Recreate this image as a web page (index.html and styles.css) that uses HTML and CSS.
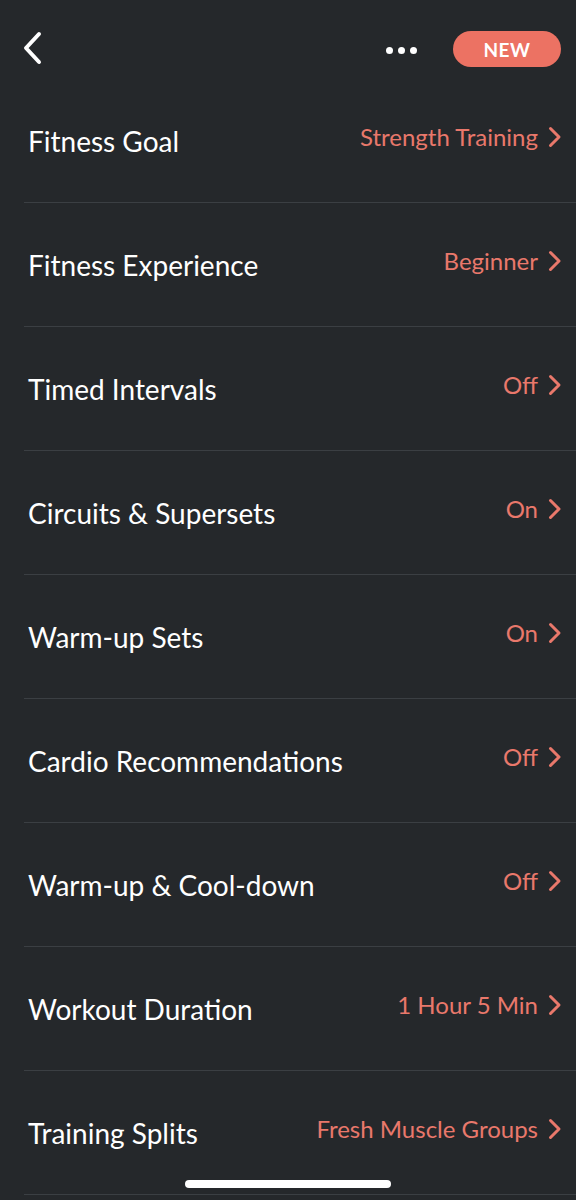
FILE: index.html
```html
<!DOCTYPE html>
<html>
<head>
<meta charset="utf-8">
<title>Workout Settings</title>
<link rel="stylesheet" href="styles.css">
</head>
<body>
<div class="screen">
  <div class="topbar">
    <svg class="back" width="24" height="36" viewBox="0 0 24 36">
      <path d="M17 3 L4 17 L17 31" fill="none" stroke="#fff" stroke-width="4" stroke-linecap="round" stroke-linejoin="round"/>
    </svg>
    <div class="actions">
      <div class="dots"><span></span><span></span><span></span></div>
      <div class="pill">NEW</div>
    </div>
  </div>

  <div class="list">
    <div class="row"><span class="label">Fitness Goal</span><span class="value">Strength Training<svg class="chev" width="14" height="22" viewBox="0 0 14 22"><path d="M2.5 2.5 L11 11 L2.5 19.5"/></svg></span></div>
    <div class="row"><span class="label">Fitness Experience</span><span class="value">Beginner<svg class="chev" width="14" height="22" viewBox="0 0 14 22"><path d="M2.5 2.5 L11 11 L2.5 19.5"/></svg></span></div>
    <div class="row"><span class="label">Timed Intervals</span><span class="value">Off<svg class="chev" width="14" height="22" viewBox="0 0 14 22"><path d="M2.5 2.5 L11 11 L2.5 19.5"/></svg></span></div>
    <div class="row"><span class="label">Circuits &amp; Supersets</span><span class="value">On<svg class="chev" width="14" height="22" viewBox="0 0 14 22"><path d="M2.5 2.5 L11 11 L2.5 19.5"/></svg></span></div>
    <div class="row"><span class="label">Warm-up Sets</span><span class="value">On<svg class="chev" width="14" height="22" viewBox="0 0 14 22"><path d="M2.5 2.5 L11 11 L2.5 19.5"/></svg></span></div>
    <div class="row"><span class="label">Cardio Recommendations</span><span class="value">Off<svg class="chev" width="14" height="22" viewBox="0 0 14 22"><path d="M2.5 2.5 L11 11 L2.5 19.5"/></svg></span></div>
    <div class="row"><span class="label">Warm-up &amp; Cool-down</span><span class="value">Off<svg class="chev" width="14" height="22" viewBox="0 0 14 22"><path d="M2.5 2.5 L11 11 L2.5 19.5"/></svg></span></div>
    <div class="row"><span class="label">Workout Duration</span><span class="value">1 Hour 5 Min<svg class="chev" width="14" height="22" viewBox="0 0 14 22"><path d="M2.5 2.5 L11 11 L2.5 19.5"/></svg></span></div>
    <div class="row"><span class="label">Training Splits</span><span class="value">Fresh Muscle Groups<svg class="chev" width="14" height="22" viewBox="0 0 14 22"><path d="M2.5 2.5 L11 11 L2.5 19.5"/></svg></span></div>
  </div>

  <div class="home-bar"></div>
</div>
</body>
</html>
```

FILE: styles.css
```css
body {
  margin: 0;
  background-color: #25282b;
  font-family: Lato, "Noto Sans", sans-serif;
  overflow: hidden;
}

.screen {
  height: 1200px;
}

/* top bar */
.topbar {
  height: 79px;
  display: flex;
  align-items: flex-start;
  justify-content: space-between;
  padding: 31px 15px 0 22px;
  box-sizing: border-box;
}

.back {
  display: block;
}

.actions {
  display: flex;
  align-items: center;
  gap: 36px;
}

.dots {
  display: flex;
  gap: 5px;
  margin-top: 2px;
}

.dots span {
  width: 7px;
  height: 7px;
  border-radius: 50%;
  background: #fff;
}

.pill {
  width: 108px;
  height: 36px;
  border-radius: 18px;
  background: #ec7263;
  color: #fff;
  font-size: 19px;
  font-weight: 700;
  letter-spacing: 0.5px;
  display: flex;
  align-items: center;
  justify-content: center;
}

/* settings list */
.row {
  height: 123px;
  margin-left: 24px;
  padding: 0 14px 0 4px;
  border-bottom: 1px solid #3b3f43;
  display: flex;
  align-items: center;
  justify-content: space-between;
}

.label {
  color: #fff;
  font-size: 28px;
}

.value {
  color: #e9786b;
  font-size: 24px;
  display: flex;
  align-items: center;
  gap: 10px;
  margin-bottom: 8px;
}

.chev {
  display: block;
}

.chev path {
  fill: none;
  stroke: #e9786b;
  stroke-width: 3;
  stroke-linecap: round;
  stroke-linejoin: round;
}

.home-bar {
  position: fixed;
  left: 185px;
  bottom: 12px;
  width: 206px;
  height: 8px;
  border-radius: 4px;
  background: #fff;
}
```
